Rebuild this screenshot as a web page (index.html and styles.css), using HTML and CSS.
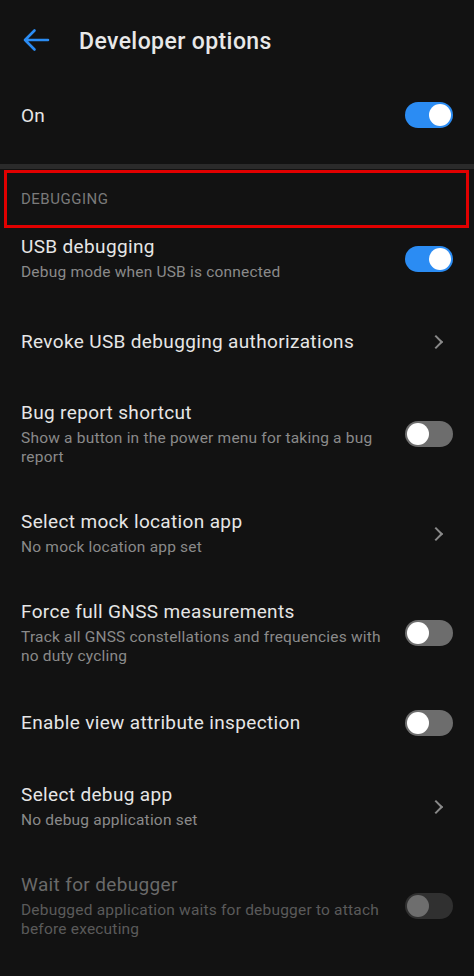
FILE: index.html
```html
<!DOCTYPE html>
<html>
<head>
  <title>Developer options</title>
  <link rel="stylesheet" href="styles.css">
</head>
<body>
  <div class="screen">
    <div class="app-bar">
      <button class="back-button">
        <svg width="28" height="24" viewBox="0 0 28 24">
          <path d="M26 12H3M12.5 2.5L3 12l9.5 9.5" fill="none" stroke="#2b8cf3" stroke-width="2.6" stroke-linecap="round" stroke-linejoin="round"/>
        </svg>
      </button>
      <h1>Developer options</h1>
    </div>

    <div class="master-row">
      <span class="master-label">On</span>
      <span class="switch on"></span>
    </div>

    <div class="divider"></div>

    <div class="category">DEBUGGING</div>

    <div class="pref-list">
      <div class="pref">
        <div class="pref-text">
          <div class="pref-title">USB debugging</div>
          <div class="pref-summary">Debug mode when USB is connected</div>
        </div>
        <div class="pref-widget"><span class="switch on"></span></div>
      </div>

      <div class="pref single">
        <div class="pref-text">
          <div class="pref-title">Revoke USB debugging authorizations</div>
        </div>
        <div class="pref-widget"><span class="chevron"></span></div>
      </div>

      <div class="pref">
        <div class="pref-text">
          <div class="pref-title">Bug report shortcut</div>
          <div class="pref-summary">Show a button in the power menu for taking a bug report</div>
        </div>
        <div class="pref-widget"><span class="switch"></span></div>
      </div>

      <div class="pref">
        <div class="pref-text">
          <div class="pref-title">Select mock location app</div>
          <div class="pref-summary">No mock location app set</div>
        </div>
        <div class="pref-widget"><span class="chevron"></span></div>
      </div>

      <div class="pref">
        <div class="pref-text">
          <div class="pref-title">Force full GNSS measurements</div>
          <div class="pref-summary">Track all GNSS constellations and frequencies with no duty cycling</div>
        </div>
        <div class="pref-widget"><span class="switch"></span></div>
      </div>

      <div class="pref single tight">
        <div class="pref-text">
          <div class="pref-title">Enable view attribute inspection</div>
        </div>
        <div class="pref-widget"><span class="switch"></span></div>
      </div>

      <div class="pref">
        <div class="pref-text">
          <div class="pref-title">Select debug app</div>
          <div class="pref-summary">No debug application set</div>
        </div>
        <div class="pref-widget"><span class="chevron"></span></div>
      </div>

      <div class="pref disabled">
        <div class="pref-text">
          <div class="pref-title">Wait for debugger</div>
          <div class="pref-summary">Debugged application waits for debugger to attach before executing</div>
        </div>
        <div class="pref-widget"><span class="switch"></span></div>
      </div>
    </div>
  </div>
</body>
</html>
```

FILE: styles.css
```css
body {
  margin: 0;
  background-color: #121212;
  font-family: Roboto, "Noto Sans", sans-serif;
  color: #e6e6e6;
}
.screen {
  width: 474px;
  height: 976px;
  overflow: hidden;
}
.app-bar {
  height: 82px;
  display: flex;
  align-items: center;
}
.back-button {
  background: none;
  border: none;
  padding: 0;
  margin-left: 22px;
  width: 28px;
  height: 24px;
  display: flex;
  margin-top: -2px;
}
.app-bar h1 {
  margin: 0 0 0 29px;
  font-size: 23px;
  letter-spacing: 0.4px;
  font-weight: 500;
  color: #e8e8e8;
}
.master-row {
  height: 66px;
  padding: 0 21px;
  margin-bottom: 16px;
  display: flex;
  align-items: center;
  justify-content: space-between;
}
.master-label {
  font-size: 19px;
  letter-spacing: 0.3px;
}
.divider {
  height: 5px;
  background-color: #2a2a2a;
}
.category {
  margin: 1px 5px 0 4px;
  height: 52px;
  border: 3px solid #e00000;
  padding-left: 14px;
  display: flex;
  align-items: center;
  font-size: 15px;
  letter-spacing: 0.5px;
  color: #7a7a7a;
}
.pref {
  display: flex;
  align-items: center;
  padding: 21.5px 21px;
}
.pref:first-child {
  padding-top: 7px;
}
.pref.single {
  padding-top: 26px;
  padding-bottom: 26px;
}
.pref.tight {
  padding-top: 22px;
}
.pref-text {
  flex: 1;
  min-width: 0;
}
.pref-title {
  font-size: 19px;
  letter-spacing: 0.35px;
  line-height: 24px;
  color: #e6e6e6;
}
.pref-summary {
  margin-top: 4px;
  font-size: 15.5px;
  letter-spacing: 0.2px;
  line-height: 19px;
  color: #8a8a8a;
}
.pref-widget {
  width: 48px;
  margin-left: 22px;
  display: flex;
  justify-content: flex-end;
}
.switch {
  position: relative;
  display: block;
  width: 48px;
  height: 26px;
  border-radius: 13px;
  background-color: #6d6d6d;
}
.switch:after {
  content: "";
  position: absolute;
  top: 2px;
  left: 2px;
  width: 22px;
  height: 22px;
  border-radius: 50%;
  background-color: #fff;
}
.switch.on {
  background-color: #2b8cf3;
}
.switch.on:after {
  left: 24px;
}
.chevron {
  width: 8px;
  height: 8px;
  margin-right: 12px;
  border-top: 2px solid #8a8a8a;
  border-right: 2px solid #8a8a8a;
  transform: rotate(45deg);
}
.disabled .pref-title {
  color: #6a6a6a;
}
.disabled .pref-summary {
  color: #5a5a5a;
}
.disabled .switch {
  background-color: #303030;
}
.disabled .switch:after {
  background-color: #6e6e6e;
}
```
